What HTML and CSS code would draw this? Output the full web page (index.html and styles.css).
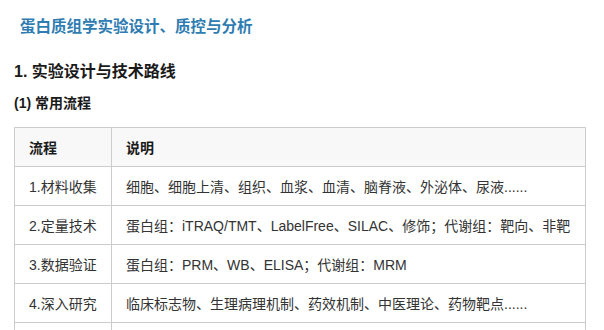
FILE: index.html
```html
<!DOCTYPE html>
<html lang="zh-CN">
<head>
<meta charset="utf-8">
<title>蛋白质组学实验设计、质控与分析</title>
<link rel="stylesheet" href="styles.css">
</head>
<body>
<div class="page">
  <h2 class="title">蛋白质组学实验设计、质控与分析</h2>
  <h3 class="section">1. 实验设计与技术路线</h3>
  <h4 class="sub">(1) 常用流程</h4>
  <table class="flow">
    <thead>
      <tr><th class="c1">流程</th><th>说明</th></tr>
    </thead>
    <tbody>
      <tr><td class="c1">1.材料收集</td><td>细胞、细胞上清、组织、血浆、血清、脑脊液、外泌体、尿液......</td></tr>
      <tr><td class="c1">2.定量技术</td><td>蛋白组：iTRAQ/TMT、LabelFree、SILAC、修饰；代谢组：靶向、非靶</td></tr>
      <tr><td class="c1">3.数据验证</td><td>蛋白组：PRM、WB、ELISA；代谢组：MRM</td></tr>
      <tr><td class="c1">4.深入研究</td><td>临床标志物、生理病理机制、药效机制、中医理论、药物靶点......</td></tr>
      <tr><td class="c1"></td><td></td></tr>
    </tbody>
  </table>
</div>
</body>
</html>
```
FILE: styles.css
```css
html, body {
  margin: 0;
  padding: 0;
  background: #ffffff;
}
body {
  font-family: "Liberation Sans", "Noto Sans CJK SC", sans-serif;
  color: #333333;
}
.page {
  padding: 17px 18px 0 14px;
}
.title {
  margin: 0 0 0 6px;
  font-size: 15.5px;
  line-height: 20px;
  font-weight: bold;
  color: #2e7cb1;
}
.section {
  margin: 23px 0 0 0;
  font-size: 16px;
  line-height: 24px;
  font-weight: bold;
  color: #1a1a1a;
}
.sub {
  margin: 9px 0 0 0;
  font-size: 14px;
  line-height: 20px;
  font-weight: bold;
  color: #1a1a1a;
}
.flow {
  margin-top: 14px;
  width: 572px;
  border-collapse: collapse;
  font-size: 14px;
}
.flow th, .flow td {
  border: 1px solid #cccccc;
  height: 39px;
  padding: 0 14px;
  text-align: left;
  vertical-align: middle;
  box-sizing: border-box;
  white-space: nowrap;
}
.flow th {
  background: #f8f8f8;
  font-weight: bold;
  color: #1a1a1a;
}
.flow td {
  color: #333333;
}
.flow .c1 {
  width: 97px;
}
```
